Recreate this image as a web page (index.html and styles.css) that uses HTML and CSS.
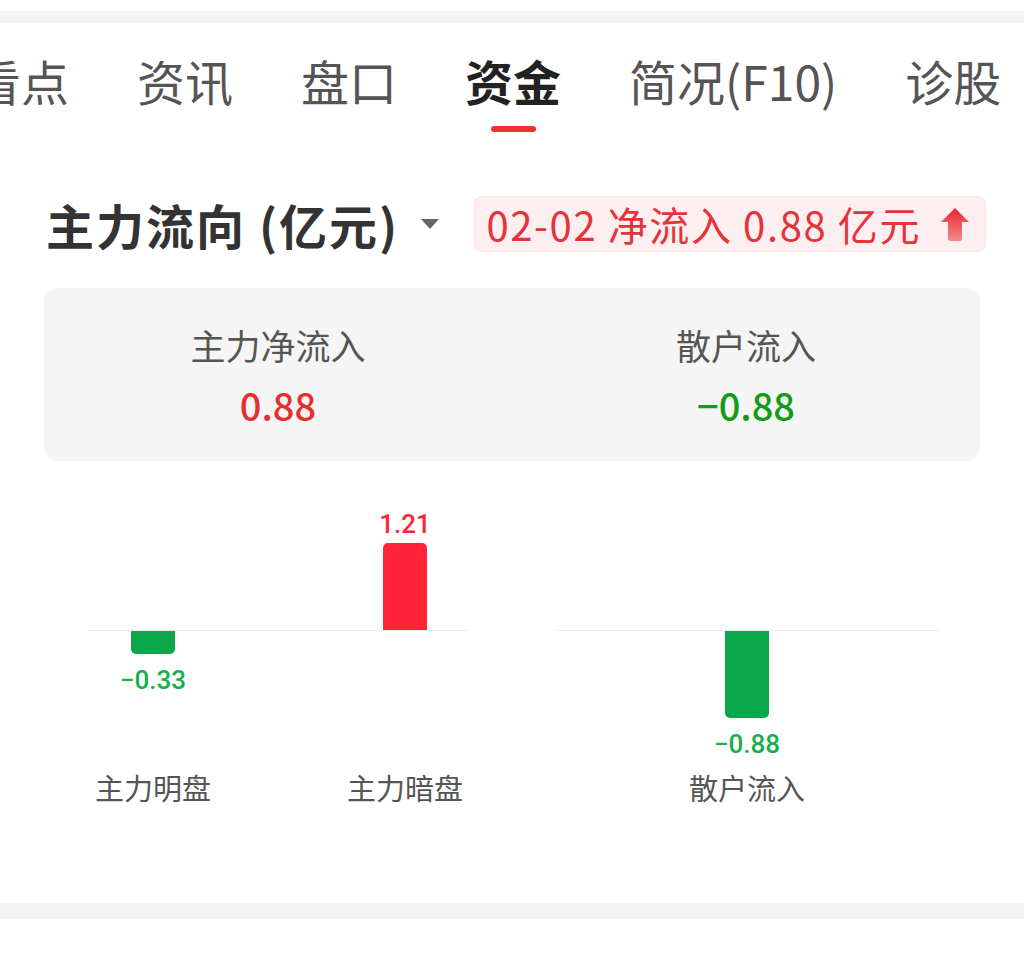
FILE: index.html
```html
<!DOCTYPE html>
<html lang="zh-CN">
<head>
  <meta charset="UTF-8">
  <meta name="viewport" content="width=device-width, initial-scale=1.0">
  <title>资金</title>
  <link rel="stylesheet" href="styles.css">
</head>
<body>
  <div class="gap-top"></div>

  <div class="tabs">
    <div class="tab first"><span>看点</span><i></i></div>
    <div class="tab"><span>资讯</span><i></i></div>
    <div class="tab"><span>盘口</span><i></i></div>
    <div class="tab on"><span>资金</span><i></i></div>
    <div class="tab"><span>简况(F10)</span><i></i></div>
    <div class="tab"><span>诊股</span><i></i></div>
  </div>

  <div class="head">
    <div class="title">
      <span>主力流向 (亿元)</span>
      <em class="caret"></em>
    </div>
    <div class="badge">
      <span>02-02 净流入 0.88 亿元</span>
      <svg width="28" height="33" viewBox="0 0 28 33">
        <defs>
          <linearGradient id="up" x1="0" y1="0" x2="0" y2="1">
            <stop offset="0" stop-color="#e8262e"/>
            <stop offset="1" stop-color="#f28a8e"/>
          </linearGradient>
        </defs>
        <path d="M14 0 L28 14 L21 14 L21 31 Q21 33 19 33 L9 33 Q7 33 7 31 L7 14 L0 14 Z" fill="url(#up)"/>
      </svg>
    </div>
  </div>

  <div class="card">
    <div class="cell">
      <div class="lbl">主力净流入</div>
      <div class="val red">0.88</div>
    </div>
    <div class="cell">
      <div class="lbl">散户流入</div>
      <div class="val green">−0.88</div>
    </div>
  </div>

  <div class="chart">
    <div class="group">
      <div class="row up">
        <div class="col"></div>
        <div class="col"><b class="num red">1.21</b><div class="bar pos" style="height:87px"></div></div>
      </div>
      <div class="axis"></div>
      <div class="row down">
        <div class="col"><div class="bar neg" style="height:23px"></div><b class="num green">−0.33</b></div>
        <div class="col"></div>
      </div>
      <div class="row names">
        <div class="col">主力明盘</div>
        <div class="col">主力暗盘</div>
      </div>
    </div>
    <div class="group single">
      <div class="row up">
        <div class="col"></div>
      </div>
      <div class="axis"></div>
      <div class="row down">
        <div class="col"><div class="bar neg" style="height:87px"></div><b class="num green">−0.88</b></div>
      </div>
      <div class="row names">
        <div class="col">散户流入</div>
      </div>
    </div>
  </div>

  <div class="gap-bottom"></div>
</body>
</html>
```

FILE: styles.css
```css
*{margin:0; padding:0; box-sizing:border-box;}
body{background:#fff; font-family:"Noto Sans CJK SC", "Noto Sans", sans-serif; color:#333; overflow:hidden;}

.gap-top{height:23px; border-top:11px solid #fff; background:#f4f4f4;}

/* tabs */
.tabs{display:flex; gap:68px; margin-left:-27px; padding-top:26px; white-space:nowrap;}
.tab{display:flex; flex-direction:column; align-items:center; font-size:48px; line-height:62px; color:#555;}
.tab i{display:block; width:45px; height:6px; margin-top:15px; border-radius:3px;}
.tab.on{color:#222; font-weight:700;}
.tab.on i{background:#f0322e;}

/* heading row */
.head{display:flex; align-items:center; justify-content:space-between; margin-top:64px; padding:0 38px 0 46px;}
.title{display:flex; align-items:center; font-size:48px; letter-spacing:2px; font-weight:700; color:#333; line-height:56px;}
.caret{display:block; margin-left:22px; width:0; height:0; border-left:9px solid transparent; border-right:9px solid transparent; border-top:10px solid #666;}
.badge{display:flex; align-items:center; gap:20px; height:56px; padding:0 16px 0 12px; background:#fdeff0; border:1px solid #fbe1e3; border-radius:8px; font-size:40px; letter-spacing:1.6px; color:#e5333b; line-height:56px;}
.badge svg{display:block;}

/* summary card */
.card{display:flex; margin:36px 44px 0; padding:35px 0 34px; background:#f5f5f5; border-radius:14px;}
.cell{flex:1; display:flex; flex-direction:column; align-items:center; gap:16px;}
.lbl{font-size:35px; line-height:44px; color:#555;}
.val{font-size:38px; line-height:44px; font-weight:500;}
.red{color:#e5302f;}
.green{color:#119c17;}

/* bar chart */
.chart{display:flex; gap:86px; margin-top:29px; padding-left:88px;}
.group{width:382px;}
.row{display:flex; justify-content:space-between;}
.group.single .row{justify-content:center;}
.col{width:130px; display:flex; flex-direction:column; align-items:center;}
.up{height:140px; align-items:flex-end;}
.up .col{justify-content:flex-end;}
.down{height:138px; align-items:flex-start;}
.axis{height:1px; background:#ececec;}
.bar{width:44px;}
.bar.pos{background:#ff2337; border-radius:5px 5px 0 0;}
.bar.neg{background:#0aa84a; border-radius:0 0 5px 5px;}
.num{font-family:Roboto, "Noto Sans", sans-serif; font-weight:500; font-size:26px; line-height:28px;}
.up .num{margin-bottom:5px; color:#ff2337;}
.down .num{margin-top:12px; color:#16b04b;}
.names{font-size:29px; line-height:36px; color:#555;}

.gap-bottom{height:16px; margin-top:98px; background:#f4f4f4;}
```
